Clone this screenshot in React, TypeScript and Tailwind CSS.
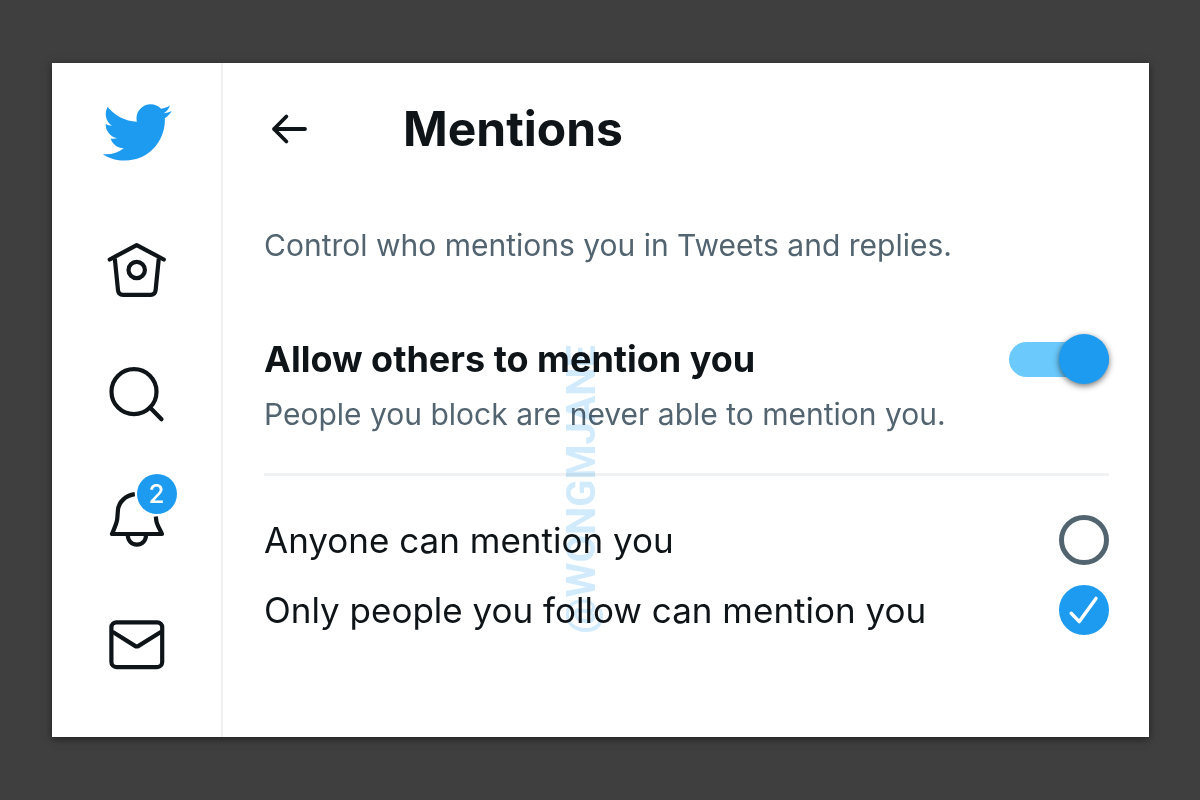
import { useState } from "react";
import type { ReactNode } from "react";

interface NavItemProps {
    label: string;
    badge?: number;
    children: ReactNode;
}

const options = [
    { id: "anyone", label: "Anyone can mention you" },
    { id: "following", label: "Only people you follow can mention you" },
];

function TwitterLogo() {
    return (
        <svg viewBox="0 0 24 24" className="size-[73px] fill-[#1d9bf0]" aria-hidden="true">
            <path d="M23.643 4.937c-.835.37-1.732.62-2.675.733.962-.576 1.7-1.49 2.048-2.578-.9.534-1.897.922-2.958 1.13-.85-.904-2.06-1.47-3.4-1.47-2.572 0-4.658 2.086-4.658 4.66 0 .364.042.718.12 1.06-3.873-.195-7.304-2.05-9.602-4.868-.4.69-.63 1.49-.63 2.342 0 1.616.823 3.043 2.072 3.878-.764-.025-1.482-.234-2.11-.583v.06c0 2.257 1.605 4.14 3.737 4.568-.392.106-.803.162-1.227.162-.3 0-.593-.028-.877-.082.593 1.85 2.313 3.198 4.352 3.234-1.595 1.25-3.604 1.995-5.786 1.995-.376 0-.747-.022-1.112-.065 2.062 1.323 4.51 2.093 7.14 2.093 8.57 0 13.255-7.098 13.255-13.254 0-.2-.005-.402-.014-.602.91-.658 1.7-1.477 2.323-2.41z" />
        </svg>
    );
}

function NavItem({ label, badge, children }: NavItemProps) {
    return (
        <a href="#" aria-label={label} className="relative block size-16">
            <svg
                viewBox="0 0 64 64"
                className="size-16 overflow-visible"
                fill="none"
                stroke="#0f1419"
                strokeWidth="4.2"
                strokeLinejoin="round"
                aria-hidden="true"
            >
                {children}
            </svg>
            {badge && (
                <span className="absolute left-8 -top-3.5 flex size-10 items-center justify-center rounded-full bg-[#1d9bf0] text-[26px] leading-none font-medium text-white">
                    {badge}
                </span>
            )}
        </a>
    );
}

export default function App() {
    const [allowed, setAllowed] = useState(true);
    const [selected, setSelected] = useState("following");

    return (
        <div className="flex min-h-screen bg-[#3f3f3f] py-[63px] pr-[51px] pl-[52px] font-['Inter',sans-serif] text-[#0f1419]">
            <div className="relative flex flex-1 bg-white shadow-[0_2px_8px_rgba(0,0,0,0.5)]">
                <nav className="flex w-[171px] shrink-0 flex-col items-center border-r-2 border-[#eff1f2] pt-[33px]">
                    <a href="#" aria-label="Twitter" className="mb-[69px] block">
                        <TwitterLogo />
                    </a>
                    <div className="flex flex-col gap-[61px]">
                        <NavItem label="Home">
                            <path d="M4.7 21.5 31.7 7.2 58.8 21.5" strokeLinecap="round" />
                            <path d="M9.8 20.5 13 52.2Q13.5 56.8 18 56.8H45.6Q50.1 56.8 50.6 52.2L53.8 20.5" />
                            <circle cx="31.7" cy="32" r="8.2" />
                        </NavItem>
                        <NavItem label="Explore">
                            <circle cx="29" cy="28.7" r="22.5" />
                            <path d="M45 44.5 56.5 56.2" strokeLinecap="round" />
                        </NavItem>
                        <NavItem label="Notifications" badge={2}>
                            <path d="M29.8 6.2C20.5 7.6 13.6 13.8 12.9 22.5L12.3 30.5C12 35 9 41 7 46H57C55 41.5 51.8 37 51.3 32.5L50.8 28.6" />
                            <path d="M22.7 46C22.7 53 26.5 56.6 31.9 56.6S41.1 53 41.1 46" />
                        </NavItem>
                        <NavItem label="Messages">
                            <rect x="6.4" y="9.3" width="50.8" height="44.8" rx="5" />
                            <path d="M7.5 18.8 30 32.9Q31.8 34 33.6 32.9L56.2 18.8" />
                        </NavItem>
                    </div>
                </nav>

                <main className="min-w-0 flex-1 pr-10 pl-[41px]">
                    <header className="flex h-[132px] items-center gap-[94px] pl-[5px]">
                        <button type="button" aria-label="Back" className="cursor-pointer">
                            <svg
                                viewBox="0 0 40 40"
                                className="size-10"
                                fill="none"
                                stroke="#0f1419"
                                strokeWidth="3.8"
                                strokeLinecap="round"
                                strokeLinejoin="round"
                                aria-hidden="true"
                            >
                                <path d="M36 20H5M17.4 7.5 5 20l12.4 12.5" />
                            </svg>
                        </button>
                        <h1 className="text-5xl font-bold">Mentions</h1>
                    </header>

                    <p className="mt-[30px] text-[30px] leading-10 text-[#536471]">
                        Control who mentions you in Tweets and replies.
                    </p>

                    <div className="mt-[70px] flex h-12 items-center justify-between">
                        <label htmlFor="allow" className="text-4xl font-bold">
                            Allow others to mention you
                        </label>
                        <input
                            id="allow"
                            type="checkbox"
                            role="switch"
                            checked={allowed}
                            onChange={(e) => setAllowed(e.target.checked)}
                            className="flex h-[35px] w-[100px] cursor-pointer appearance-none items-center rounded-full bg-gray-300 before:size-[50px] before:shrink-0 before:rounded-full before:bg-white before:shadow-[0_2px_6px_rgba(0,0,0,0.55)] checked:justify-end checked:bg-[#6bc9fb] checked:before:bg-[#1d9bf0]"
                        />
                    </div>
                    <p className="mt-[11px] text-[30px] leading-10 text-[#536471]">
                        People you block are never able to mention you.
                    </p>

                    <hr className="mt-[39px] border-t-[3px] border-[#eff1f2]" />

                    <div role="radiogroup" aria-label="Who can mention you" className="mt-[29px]">
                        {options.map((option) => (
                            <div key={option.id} className="flex h-[70px] items-center justify-between">
                                <label htmlFor={option.id} className="text-[35px]">
                                    {option.label}
                                </label>
                                <div className="relative size-[50px] shrink-0">
                                    <input
                                        id={option.id}
                                        type="radio"
                                        name="mentions"
                                        checked={selected === option.id}
                                        onChange={() => setSelected(option.id)}
                                        className="block size-[50px] cursor-pointer appearance-none rounded-full border-[5px] border-[#536471] checked:border-[#1d9bf0] checked:bg-[#1d9bf0]"
                                    />
                                    {selected === option.id && (
                                        <svg
                                            viewBox="0 0 50 50"
                                            className="pointer-events-none absolute inset-0"
                                            fill="none"
                                            stroke="white"
                                            strokeWidth="3.4"
                                            strokeLinecap="round"
                                            strokeLinejoin="round"
                                            aria-hidden="true"
                                        >
                                            <path d="M12.2 28.2 20.3 36.6 37 13.4" />
                                        </svg>
                                    )}
                                </div>
                            </div>
                        ))}
                    </div>
                </main>

                {/* watermark */}
                <span className="pointer-events-none absolute top-[282px] left-[505px] rotate-180 font-['Liberation_Sans_Narrow','Roboto',sans-serif] text-[40px] leading-[50px] font-bold text-[#1d9bf0]/20 mix-blend-multiply [writing-mode:vertical-rl]">
                    @WONGMJANE
                </span>
            </div>
        </div>
    );
}
